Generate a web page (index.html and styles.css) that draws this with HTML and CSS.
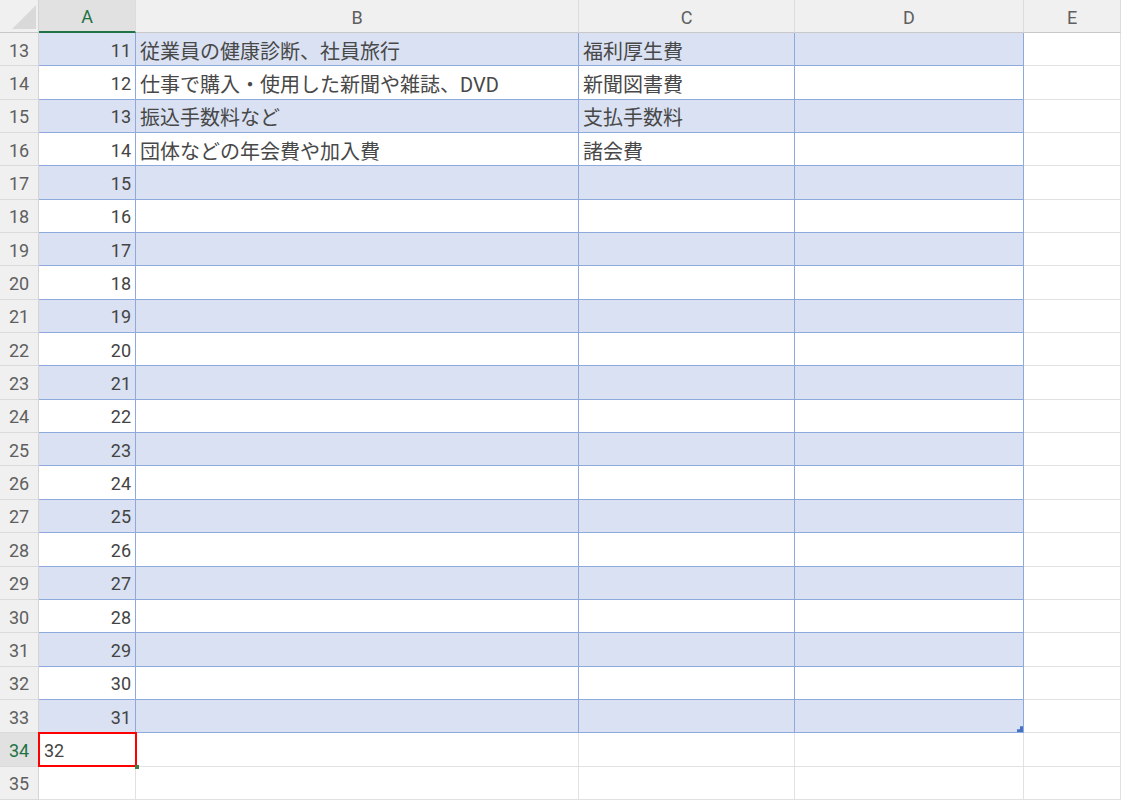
FILE: index.html
```html
<!DOCTYPE html>
<html lang="ja">
<head>
<meta charset="utf-8">
<title>Sheet</title>
<link rel="stylesheet" href="styles.css">
</head>
<body>
<div class="sheet">
  <div class="row head">
    <div class="corner"><span class="tri"></span></div>
    <div class="ch sel">A</div>
    <div class="ch">B</div>
    <div class="ch">C</div>
    <div class="ch">D</div>
    <div class="ch">E</div>
  </div>

  <div class="row band"><div class="rh">13</div><div class="c t num">11</div><div class="c t txt">従業員の健康診断、社員旅行</div><div class="c t txt">福利厚生費</div><div class="c t"></div><div class="c"></div></div>
  <div class="row"><div class="rh">14</div><div class="c t num">12</div><div class="c t txt">仕事で購入・使用した新聞や雑誌、DVD</div><div class="c t txt">新聞図書費</div><div class="c t"></div><div class="c"></div></div>
  <div class="row band"><div class="rh">15</div><div class="c t num">13</div><div class="c t txt">振込手数料など</div><div class="c t txt">支払手数料</div><div class="c t"></div><div class="c"></div></div>
  <div class="row"><div class="rh">16</div><div class="c t num">14</div><div class="c t txt">団体などの年会費や加入費</div><div class="c t txt">諸会費</div><div class="c t"></div><div class="c"></div></div>
  <div class="row band"><div class="rh">17</div><div class="c t num">15</div><div class="c t"></div><div class="c t"></div><div class="c t"></div><div class="c"></div></div>
  <div class="row"><div class="rh">18</div><div class="c t num">16</div><div class="c t"></div><div class="c t"></div><div class="c t"></div><div class="c"></div></div>
  <div class="row band"><div class="rh">19</div><div class="c t num">17</div><div class="c t"></div><div class="c t"></div><div class="c t"></div><div class="c"></div></div>
  <div class="row"><div class="rh">20</div><div class="c t num">18</div><div class="c t"></div><div class="c t"></div><div class="c t"></div><div class="c"></div></div>
  <div class="row band"><div class="rh">21</div><div class="c t num">19</div><div class="c t"></div><div class="c t"></div><div class="c t"></div><div class="c"></div></div>
  <div class="row"><div class="rh">22</div><div class="c t num">20</div><div class="c t"></div><div class="c t"></div><div class="c t"></div><div class="c"></div></div>
  <div class="row band"><div class="rh">23</div><div class="c t num">21</div><div class="c t"></div><div class="c t"></div><div class="c t"></div><div class="c"></div></div>
  <div class="row"><div class="rh">24</div><div class="c t num">22</div><div class="c t"></div><div class="c t"></div><div class="c t"></div><div class="c"></div></div>
  <div class="row band"><div class="rh">25</div><div class="c t num">23</div><div class="c t"></div><div class="c t"></div><div class="c t"></div><div class="c"></div></div>
  <div class="row"><div class="rh">26</div><div class="c t num">24</div><div class="c t"></div><div class="c t"></div><div class="c t"></div><div class="c"></div></div>
  <div class="row band"><div class="rh">27</div><div class="c t num">25</div><div class="c t"></div><div class="c t"></div><div class="c t"></div><div class="c"></div></div>
  <div class="row"><div class="rh">28</div><div class="c t num">26</div><div class="c t"></div><div class="c t"></div><div class="c t"></div><div class="c"></div></div>
  <div class="row band"><div class="rh">29</div><div class="c t num">27</div><div class="c t"></div><div class="c t"></div><div class="c t"></div><div class="c"></div></div>
  <div class="row"><div class="rh">30</div><div class="c t num">28</div><div class="c t"></div><div class="c t"></div><div class="c t"></div><div class="c"></div></div>
  <div class="row band"><div class="rh">31</div><div class="c t num">29</div><div class="c t"></div><div class="c t"></div><div class="c t"></div><div class="c"></div></div>
  <div class="row"><div class="rh">32</div><div class="c t num">30</div><div class="c t"></div><div class="c t"></div><div class="c t"></div><div class="c"></div></div>
  <div class="row band"><div class="rh">33</div><div class="c t num">31</div><div class="c t"></div><div class="c t"></div><div class="c t last"><span class="resize"></span></div><div class="c"></div></div>
  <div class="row"><div class="rh rsel">34</div><div class="c active">32<span class="fill"></span></div><div class="c"></div><div class="c"></div><div class="c"></div><div class="c"></div></div>
  <div class="row"><div class="rh">35</div><div class="c"></div><div class="c"></div><div class="c"></div><div class="c"></div><div class="c"></div></div>
</div>
</body>
</html>
```

FILE: styles.css
```css
* { box-sizing: border-box; }
html, body { margin: 0; padding: 0; background: #fff; }
body {
  font-family: Roboto, "Noto Sans CJK JP", sans-serif;
  color: #444;
  overflow: hidden;
}
.sheet {
  width: 1121px;
  height: 800px;
  display: flex;
  flex-direction: column;
}
.row {
  display: grid;
  grid-template-columns: 39px 97px 443px 216px 229px 97px;
  flex: 1 1 0;
  min-height: 0;
}
.row.head {
  flex: 0 0 33px;
}
.corner {
  background: #f0f0f0;
  border-right: 1px solid #d4d4d4;
  border-bottom: 1px solid #c8c8c8;
  position: relative;
}
.tri {
  position: absolute;
  left: 12px;
  top: 5px;
  width: 24px;
  height: 24px;
  background: #d9d9d9;
  clip-path: polygon(100% 0, 100% 100%, 0 100%);
}
.ch {
  background: #f0f0f0;
  border-right: 1px solid #dcdcdc;
  border-bottom: 1px solid #c8c8c8;
  color: #5f5f5f;
  font-size: 18px;
  display: flex;
  align-items: center;
  justify-content: center;
  padding-top: 2px;
}
.ch.sel {
  background: #e1e1e1;
  color: #217346;
  border-bottom: 2px solid #217346;
}
.rh {
  background: #f0f0f0;
  border-right: 1px solid #d4d4d4;
  border-bottom: 1px solid #dadada;
  color: #5f5f5f;
  font-size: 18px;
  display: flex;
  align-items: center;
  justify-content: center;
  padding-top: 2px;
}
.rh.rsel {
  background: #e1e1e1;
  color: #217346;
}
.c {
  border-right: 1px solid #e1e1e1;
  border-bottom: 1px solid #e1e1e1;
  display: flex;
  align-items: center;
  padding: 2px 4px 0;
  font-size: 18px;
  white-space: nowrap;
  overflow: visible;
  position: relative;
}
.c.t {
  border-right-color: #8ea9db;
  border-bottom-color: #8ea9db;
}
.band .c.t { background: #d9e1f2; }
.num { justify-content: flex-end; }
.txt { font-size: 20px; color: #484848; }
.active {
  padding-left: 5px;
  z-index: 3;
}
.active::after {
  content: "";
  position: absolute;
  left: -1px;
  top: -1px;
  right: -2px;
  bottom: -1px;
  border: 2px solid #ff0000;
}
.fill {
  position: absolute;
  right: -4px;
  bottom: -3px;
  width: 4px;
  height: 4px;
  background: #3a7d44;
  z-index: 2;
}
.resize {
  position: absolute;
  right: 0;
  bottom: 0;
  width: 6px;
  height: 6px;
  background: #4472c4;
  clip-path: polygon(100% 0, 100% 100%, 0 100%, 0 50%, 50% 50%, 50% 0);
}
```
